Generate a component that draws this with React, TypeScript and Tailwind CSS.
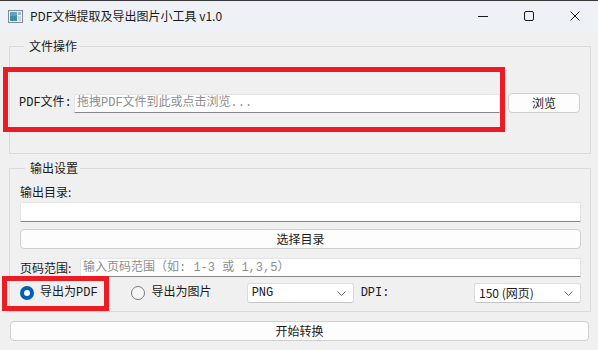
import React from "react";

const sans = "font-['Noto_Sans_CJK_SC','Noto_Sans',sans-serif]";
const song = "font-['Liberation_Mono','Noto_Sans_CJK_SC',monospace]";

function AppIcon() {
  return (
    <svg width="15" height="13" viewBox="0 0 15 13">
      <rect x="0.5" y="0.5" width="14" height="12" fill="#eef3f6" stroke="#7d8a96" />
      <rect x="2" y="2" width="7" height="9" fill="#3f8fa0" />
      <rect x="2" y="2" width="7" height="4" fill="#5e9fc4" />
      <rect x="10" y="2" width="3" height="3" fill="#9fb7c9" />
      <rect x="10" y="6" width="3" height="5" fill="#c9d6df" />
    </svg>
  );
}

function TitleBar() {
  return (
    <div className="flex h-[31px] items-center border-t border-[#3a3a3a] bg-[#eef2f6]">
      <div className="ml-[8px] flex items-center">
        <AppIcon />
      </div>
      <span className={`ml-[7px] text-[12px] text-[#1a1a1a] ${sans}`}>
        PDF文档提取及导出图片小工具 v1.0
      </span>
      <div className="ml-auto flex h-full items-center">
        <div className="flex h-full w-[46px] items-center justify-center">
          <svg width="10" height="10" viewBox="0 0 10 10">
            <path d="M0 5.5H10" stroke="#1a1a1a" strokeWidth="1" />
          </svg>
        </div>
        <div className="flex h-full w-[46px] items-center justify-center">
          <svg width="10" height="10" viewBox="0 0 10 10">
            <rect x="0.5" y="0.5" width="9" height="9" rx="1.5" fill="none" stroke="#1a1a1a" strokeWidth="1" />
          </svg>
        </div>
        <div className="flex h-full w-[46px] items-center justify-center">
          <svg width="10" height="10" viewBox="0 0 10 10">
            <path d="M0.5 0.5L9.5 9.5M9.5 0.5L0.5 9.5" stroke="#1a1a1a" strokeWidth="1" />
          </svg>
        </div>
      </div>
    </div>
  );
}

function Chevron() {
  return (
    <svg width="9" height="5" viewBox="0 0 9 5">
      <path d="M0.5 0.5L4.5 4.5L8.5 0.5" fill="none" stroke="#6b6b6b" strokeWidth="1" />
    </svg>
  );
}

function Combo({ value, className }: { value: string; className: string }) {
  return (
    <div
      className={`flex h-[20px] items-center justify-between rounded-[3px] border border-[#dcdcdc] border-b-[#c4c4c4] bg-white pl-[4px] pr-[7px] text-[12px] text-[#1a1a1a] ${className}`}
    >
      <span>{value}</span>
      <Chevron />
    </div>
  );
}

export default function App() {
  return (
    <div className="relative h-[350px] w-[598px] overflow-hidden bg-[#f0f0f0]">
      <TitleBar />

      <div className="flex flex-col pl-[9px] pr-[7px]">
        <fieldset className="mt-[7px] border border-[#dadada] pb-[40px] pt-[39px] pl-[9px] pr-[10px]">
          <legend className={`ml-[5px] pl-[5px] pr-[2px] text-[12px] leading-[16px] text-[#1a1a1a] ${sans}`}>
            文件操作
          </legend>
          <div className="flex h-[20px] items-center">
            <span className={`w-[55px] text-[12px] text-[#1a1a1a] ${song}`}>PDF文件:</span>
            <div
              className={`flex h-[19px] w-[426px] items-center rounded-t-[2px] border border-[#e4e4e4] border-b-[#878787] bg-white pl-[2px] text-[12px] text-[#8d8d8d] ${song}`}
            >
              拖拽PDF文件到此或点击浏览...
            </div>
            <button
              className={`ml-[8px] flex h-[20px] w-[72px] items-center justify-center rounded-[4px] border border-[#d0d0d0] bg-[#fdfdfd] text-[12px] text-[#1a1a1a] ${sans}`}
            >
              浏览
            </button>
          </div>
        </fieldset>

        <fieldset className="mt-[6px] border border-[#dadada] pb-[8px] pl-[10px] pr-[9px]">
          <legend className={`ml-[5px] pl-[5px] pr-[2px] text-[12px] leading-[16px] text-[#1a1a1a] ${sans}`}>
            输出设置
          </legend>
          <div className={`mt-[8px] h-[16px] text-[12px] leading-[16px] text-[#1a1a1a] ${sans}`}>
            输出目录:
          </div>
          <div className="mt-[2px] h-[20px] rounded-t-[2px] border border-[#e4e4e4] border-b-[#878787] bg-white" />
          <button
            className={`mt-[7px] flex h-[20px] w-full items-center justify-center rounded-[4px] border border-[#d0d0d0] bg-[#fdfdfd] text-[12px] text-[#1a1a1a] ${sans}`}
          >
            选择目录
          </button>
          <div className="mt-[9px] flex h-[19px] items-center">
            <span className={`w-[60px] text-[12px] text-[#1a1a1a] ${sans}`}>页码范围:</span>
            <div
              className={`flex h-[19px] flex-1 items-center rounded-t-[2px] border border-[#e4e4e4] border-b-[#878787] bg-white pl-[2px] text-[12px] text-[#8d8d8d] ${song}`}
            >
              输入页码范围（如: 1-3 或 1,3,5）
            </div>
          </div>
          <div className={`mt-[6px] flex h-[20px] items-center text-[12px] text-[#1a1a1a] ${song}`}>
            <span className="flex h-[14px] w-[14px] items-center justify-center rounded-full bg-[#005fb8]">
              <span className="h-[6px] w-[6px] rounded-full bg-white" />
            </span>
            <span className="ml-[6px]">导出为PDF</span>
            <span className="ml-[33px] h-[14px] w-[14px] rounded-full border border-[#7a7a7a] bg-[#f6f6f6]" />
            <span className="ml-[7px]">导出为图片</span>
            <Combo value="PNG" className="ml-[35px] w-[107px]" />
            <span className="ml-[7px]">DPI:</span>
            <Combo value="150 (网页)" className={`ml-auto w-[107px] ${sans}`} />
          </div>
        </fieldset>

        <button
          className={`ml-[1px] mr-[2px] mt-[9px] flex h-[20px] items-center justify-center rounded-[4px] border border-[#d0d0d0] bg-[#fdfdfd] text-[12px] text-[#1a1a1a] ${sans}`}
        >
          开始转换
        </button>
      </div>

      <div className="pointer-events-none absolute left-[3px] top-[67px] h-[65px] w-[502px] border-[5px] border-[#ed1c24]" />
      <div className="pointer-events-none absolute left-[2px] top-[276px] h-[35px] w-[107px] border-[5px] border-[#ed1c24]" />
    </div>
  );
}
